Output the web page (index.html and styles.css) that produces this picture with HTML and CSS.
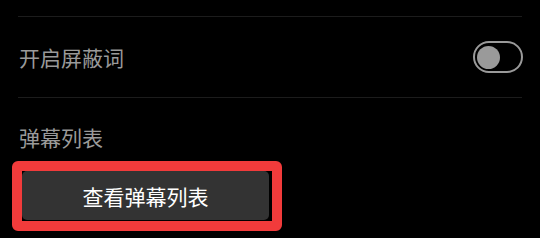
FILE: index.html
```html
<html>
<head>
<meta name="viewport" content="width=device-width, initial-scale=1">
<link rel="stylesheet" href="styles.css">
</head>
<body>
	<div class="panel">
		<div class="row">
			<span class="label">开启屏蔽词</span>
			<span class="toggle"><span class="knob"></span></span>
		</div>
		<h3 class="section-title">弹幕列表</h3>
		<div class="highlight">
			<button class="list-btn">查看弹幕列表</button>
		</div>
	</div>
</body>
</html>
```

FILE: styles.css
```css
body {
	margin: 0;
	background: #000;
	font-family: "Noto Sans CJK SC", "Noto Sans", sans-serif;
	color: #999;
}
.panel {
	padding: 16px 18px 0;
}
.row {
	display: flex;
	align-items: center;
	justify-content: space-between;
	height: 80px;
	border-top: 1px solid #1c1c1c;
	border-bottom: 1px solid #1c1c1c;
}
.label {
	font-size: 21px;
	line-height: 30px;
	color: #9a9a9a;
	padding-left: 1px;
}
.toggle {
	display: flex;
	align-items: center;
	box-sizing: border-box;
	width: 50px;
	height: 32px;
	border: 2px solid #9a9a9a;
	border-radius: 16px;
	padding-left: 2px;
	margin-right: -1px;
}
.knob {
	width: 23px;
	height: 23px;
	border-radius: 50%;
	background: #9a9a9a;
}
.section-title {
	margin: 24px 0 0;
	font-size: 21px;
	font-weight: 400;
	line-height: 30px;
	color: #9a9a9a;
	padding-left: 1px;
}
.highlight {
	width: 250px;
	height: 50px;
	margin: 9px 0 0 -6px;
	border: 10px solid #f23b3b;
	border-radius: 6px;
}
.list-btn {
	display: block;
	width: 247px;
	height: 49px;
	border: 0;
	border-radius: 5px;
	background: #333;
	color: #fff;
	font-size: 21px;
	font-family: "Noto Sans CJK SC", "Noto Sans", sans-serif;
	padding: 0;
}
```
